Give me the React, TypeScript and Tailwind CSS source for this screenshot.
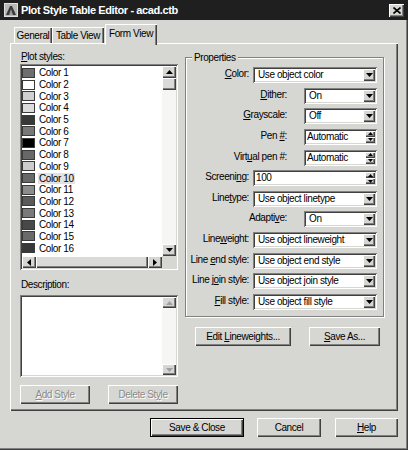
import React from "react";

const SUNKEN =
  "shadow-[inset_1px_1px_0_#808080,inset_-1px_-1px_0_#ffffff,inset_2px_2px_0_#404040,inset_-2px_-2px_0_#d6d6d2]";
const RAISED =
  "shadow-[inset_1px_1px_0_#ffffff,inset_-1px_-1px_0_#404040,inset_-2px_-2px_0_#808080]";

const U = ({ children }: { children: React.ReactNode }) => (
  <span className="underline underline-offset-[1px]">{children}</span>
);

const Tri = ({ dir, color = "#000" }: { dir: "up" | "down" | "left" | "right"; color?: string }) => {
  if (dir === "up")
    return (
      <svg width="7" height="4" viewBox="0 0 7 4">
        <polygon points="3.5,0 7,4 0,4" fill={color} />
      </svg>
    );
  if (dir === "down")
    return (
      <svg width="7" height="4" viewBox="0 0 7 4">
        <polygon points="0,0 7,0 3.5,4" fill={color} />
      </svg>
    );
  if (dir === "left")
    return (
      <svg width="4" height="7" viewBox="0 0 4 7">
        <polygon points="4,0 4,7 0,3.5" fill={color} />
      </svg>
    );
  return (
    <svg width="4" height="7" viewBox="0 0 4 7">
      <polygon points="0,0 4,3.5 0,7" fill={color} />
    </svg>
  );
};

const SmallTri = ({ dir }: { dir: "up" | "down" }) => (
  <svg width="5" height="3" viewBox="0 0 5 3">
    {dir === "up" ? (
      <polygon points="2.5,0 5,3 0,3" fill="#000" />
    ) : (
      <polygon points="0,0 5,0 2.5,3" fill="#000" />
    )}
  </svg>
);

function Combo({ value, w }: { value: string; w: string }) {
  return (
    <div className={`${w} h-[16px] bg-white p-[2px] flex ${SUNKEN}`}>
      <div className="flex-1 pl-[3px] leading-[12px] whitespace-nowrap overflow-hidden">{value}</div>
      <div className={`w-[12px] h-full bg-[#d6d6d2] flex items-center justify-center ${RAISED}`}>
        <Tri dir="down" />
      </div>
    </div>
  );
}

function Spin({ value, w }: { value: string; w: string }) {
  return (
    <div className={`${w} h-[16px] bg-white p-[2px] flex ${SUNKEN}`}>
      <div className="flex-1 pl-[1px] leading-[12px] whitespace-nowrap overflow-hidden">{value}</div>
      <div className="w-[10px] h-full flex flex-col">
        <div className={`flex-1 bg-[#d6d6d2] flex items-center justify-center ${RAISED}`}>
          <SmallTri dir="up" />
        </div>
        <div className={`flex-1 bg-[#d6d6d2] flex items-center justify-center ${RAISED}`}>
          <SmallTri dir="down" />
        </div>
      </div>
    </div>
  );
}

function Button({
  children,
  w,
  disabled,
  isDefault,
}: {
  children: React.ReactNode;
  w: string;
  disabled?: boolean;
  isDefault?: boolean;
}) {
  const inner = (
    <div
      className={`w-full h-full flex items-center justify-center whitespace-nowrap bg-[#d6d6d2] ${RAISED} ${
        disabled ? "text-[#8a8a8a] [text-shadow:1px_1px_0_#ffffff]" : "text-black"
      }`}
    >
      {children}
    </div>
  );
  if (isDefault)
    return <div className={`${w} h-[19px] border border-black`}>{inner}</div>;
  return <div className={`${w} h-[19px]`}>{inner}</div>;
}

const ScrollBtn = ({ children, h = "h-[12px]" }: { children: React.ReactNode; h?: string }) => (
  <div className={`${h} w-[14px] bg-[#d6d6d2] flex items-center justify-center ${RAISED}`}>{children}</div>
);

const swatches = [
  "#6e6e6e",
  "#ffffff",
  "#d0d0d0",
  "#dcdcdc",
  "#383838",
  "#787878",
  "#000000",
  "#686868",
  "#cccccc",
  "#686868",
  "#8c8c8c",
  "#5a5a5a",
  "#7a7a7a",
  "#484848",
  "#6a6a6a",
  "#383838",
];

type Row = { label: React.ReactNode; kind: "combo" | "spin"; long: boolean; value: string };

const rows: Row[] = [
  { label: <><U>C</U>olor:</>, kind: "combo", long: true, value: "Use object color" },
  { label: <><U>D</U>ither:</>, kind: "combo", long: false, value: "On" },
  { label: <><U>G</U>rayscale:</>, kind: "combo", long: false, value: "Off" },
  { label: <>Pen <U>#</U>:</>, kind: "spin", long: false, value: "Automatic" },
  { label: <>Virt<U>u</U>al pen #:</>, kind: "spin", long: false, value: "Automatic" },
  { label: <>Screeni<U>n</U>g:</>, kind: "spin", long: true, value: "100" },
  { label: <>Line<U>t</U>ype:</>, kind: "combo", long: true, value: "Use object linetype" },
  { label: <>Adapti<U>v</U>e:</>, kind: "combo", long: false, value: "On" },
  { label: <>Line<U>w</U>eight:</>, kind: "combo", long: true, value: "Use object lineweight" },
  { label: <>Line <U>e</U>nd style:</>, kind: "combo", long: true, value: "Use object end style" },
  { label: <>Line j<U>o</U>in style:</>, kind: "combo", long: true, value: "Use object join style" },
  { label: <><U>F</U>ill style:</>, kind: "combo", long: true, value: "Use object fill style" },
];

function TitleIcon() {
  return (
    <svg width="14" height="14" viewBox="0 0 14 14" className="ml-[4px] shrink-0">
      <rect x="0.5" y="0.5" width="13" height="13" fill="#b8b8b8" stroke="#e0e0e0" />
      <polygon points="2,12 6,3 8,3 12,12" fill="#3a3a3a" />
      <polygon points="5,12 7,6 9,12" fill="#9a9a9a" />
    </svg>
  );
}

const TAB =
  "h-[16px] flex items-center justify-center whitespace-nowrap shadow-[inset_1px_1px_0_#ffffff,inset_-1px_0_0_#404040,inset_-2px_0_0_#808080]";

export default function App() {
  return (
    <div className="w-[408px] h-[450px] bg-[#d6d6d2] relative overflow-hidden font-['Liberation_Sans',Arial,sans-serif] text-[10px] tracking-[-0.4px] leading-[13px] text-black shadow-[inset_-1px_-1px_0_#404040,inset_-2px_-2px_0_#808080]">
      {/* Title bar */}
      <div className="h-[20px] bg-[#1f1f1f] flex items-center">
        <TitleIcon />
        <span className="ml-[3px] text-white font-bold text-[11px] tracking-[-0.4px] leading-[14px] whitespace-nowrap">
          Plot Style Table Editor - acad.ctb
        </span>
        <div className={`ml-auto mr-[4px] w-[15px] h-[13px] bg-[#d6d6d2] flex items-center justify-center ${RAISED}`}>
          <svg width="8" height="7" viewBox="0 0 8 7">
            <path d="M0.5 0.5 L7.5 6.5 M7.5 0.5 L0.5 6.5" stroke="#000" strokeWidth="1.6" />
          </svg>
        </div>
      </div>

      {/* Tabs */}
      <div className="relative z-10 flex items-end h-[19px] mt-[4px] ml-[14px]">
        <div className={`w-[38px] ${TAB}`}>General</div>
        <div className={`w-[52px] ${TAB}`}>Table View</div>
        <div className="ml-[1px] w-[52px] h-[21px] -mb-[2px] bg-[#d6d6d2] flex justify-center pt-[3px] whitespace-nowrap shadow-[inset_1px_1px_0_#ffffff,inset_-1px_0_0_#404040,inset_-2px_0_0_#808080]">
          Form View
        </div>
      </div>

      {/* Tab panel */}
      <div className="ml-[10px] w-[388px] h-[368px] flex pl-[10px] shadow-[inset_1px_1px_0_#ffffff,inset_-1px_-1px_0_#404040,inset_-2px_-2px_0_#808080]">
        {/* Left column */}
        <div className="w-[158px] pt-[8px] flex flex-col">
          <div className="h-[13px] leading-[12px] pl-[1px]">
            <U>P</U>lot styles:
          </div>
          <div className={`h-[206px] bg-white p-[2px] flex flex-col ${SUNKEN}`}>
            <div className="flex-1 flex min-h-0">
              <div className="flex-1 pt-[1px] overflow-hidden">
                {swatches.map((c, i) => (
                  <div key={i} className="h-[11.7px] flex items-center">
                    <div className="w-[13px] h-[10px] border border-[#3a3a3a]" style={{ backgroundColor: c }} />
                    <span
                      className={`ml-[3px] px-[1px] leading-[11px] whitespace-nowrap ${
                        i === 9 ? "bg-[#e2e2e2]" : ""
                      }`}
                    >
                      Color {i + 1}
                    </span>
                  </div>
                ))}
              </div>
              <div className="w-[14px] flex flex-col">
                <ScrollBtn>
                  <Tri dir="up" />
                </ScrollBtn>
                <div className={`h-[12px] bg-[#dadad6] ${RAISED}`} />
                <div className="flex-1 bg-[#f6f6f4]" />
                <ScrollBtn>
                  <Tri dir="down" />
                </ScrollBtn>
              </div>
            </div>
            <div className="h-[12px] flex">
              <div className={`w-[14px] h-full bg-[#d6d6d2] flex items-center justify-center ${RAISED}`}>
                <Tri dir="left" />
              </div>
              <div className={`flex-1 h-full bg-[#dadad6] ${RAISED}`} />
              <div className={`w-[14px] h-full bg-[#d6d6d2] flex items-center justify-center ${RAISED}`}>
                <Tri dir="right" />
              </div>
              <div className="w-[14px] h-full bg-[#d6d6d2]" />
            </div>
          </div>

          <div className="mt-[9px] h-[12px] leading-[12px] pl-[1px]">
            Descr<U>i</U>ption:
          </div>
          <div className={`mt-[4px] h-[82px] bg-white p-[2px] flex ${SUNKEN}`}>
            <div className="flex-1" />
            <div className="w-[14px] flex flex-col">
              <ScrollBtn h="h-[11px]">
                <Tri dir="up" color="#a0a0a0" />
              </ScrollBtn>
              <div className="flex-1 bg-[#f6f6f4]" />
              <ScrollBtn h="h-[11px]">
                <Tri dir="down" color="#a0a0a0" />
              </ScrollBtn>
            </div>
          </div>

          <div className="mt-[8px] flex">
            <Button w="w-[71px]" disabled>
              <span>
                <U>A</U>dd Style
              </span>
            </Button>
            <div className="ml-[18px]">
              <Button w="w-[70px]" disabled>
                <span>
                  Delete St<U>y</U>le
                </span>
              </Button>
            </div>
          </div>
        </div>

        {/* Right column */}
        <div className="ml-[7px] w-[199px] flex flex-col">
          <div className="relative mt-[14px] h-[260px] border border-[#808080] shadow-[1px_1px_0_#ffffff,inset_1px_1px_0_#ffffff]">
            <span className="absolute left-[6px] -top-[7px] px-[2px] bg-[#d6d6d2] leading-[13px]">Properties</span>
            <div className="pt-[9px] flex flex-col gap-[4.64px]">
              {rows.map((r, i) => (
                <div key={i} className="h-[16px] flex items-start justify-end pr-[6px]">
                  <span className={`leading-[13px] whitespace-nowrap ${r.long ? "mr-[4px]" : "mr-[17px]"}`}>
                    {r.label}
                  </span>
                  {r.kind === "combo" ? (
                    <Combo value={r.value} w={r.long ? "w-[124px]" : "w-[73px]"} />
                  ) : (
                    <Spin value={r.value} w={r.long ? "w-[124px]" : "w-[73px]"} />
                  )}
                </div>
              ))}
            </div>
          </div>
          <div className="mt-[10px] flex">
            <div className="ml-[10px]">
              <Button w="w-[96px]">
                <span>
                  Edit <U>L</U>ineweights...
                </span>
              </Button>
            </div>
            <div className="ml-[18px]">
              <Button w="w-[71px]">
                <span>
                  <U>S</U>ave As...
                </span>
              </Button>
            </div>
          </div>
        </div>
      </div>

      {/* Bottom buttons */}
      <div className="mt-[7px] flex justify-end pr-[10px]">
        <Button w="w-[94px]" isDefault>
          Save &amp; Close
        </Button>
        <div className="ml-[13px]">
          <Button w="w-[64px]">Cancel</Button>
        </div>
        <div className="ml-[14px]">
          <Button w="w-[63px]">
            <span>
              <U>H</U>elp
            </span>
          </Button>
        </div>
      </div>
    </div>
  );
}
